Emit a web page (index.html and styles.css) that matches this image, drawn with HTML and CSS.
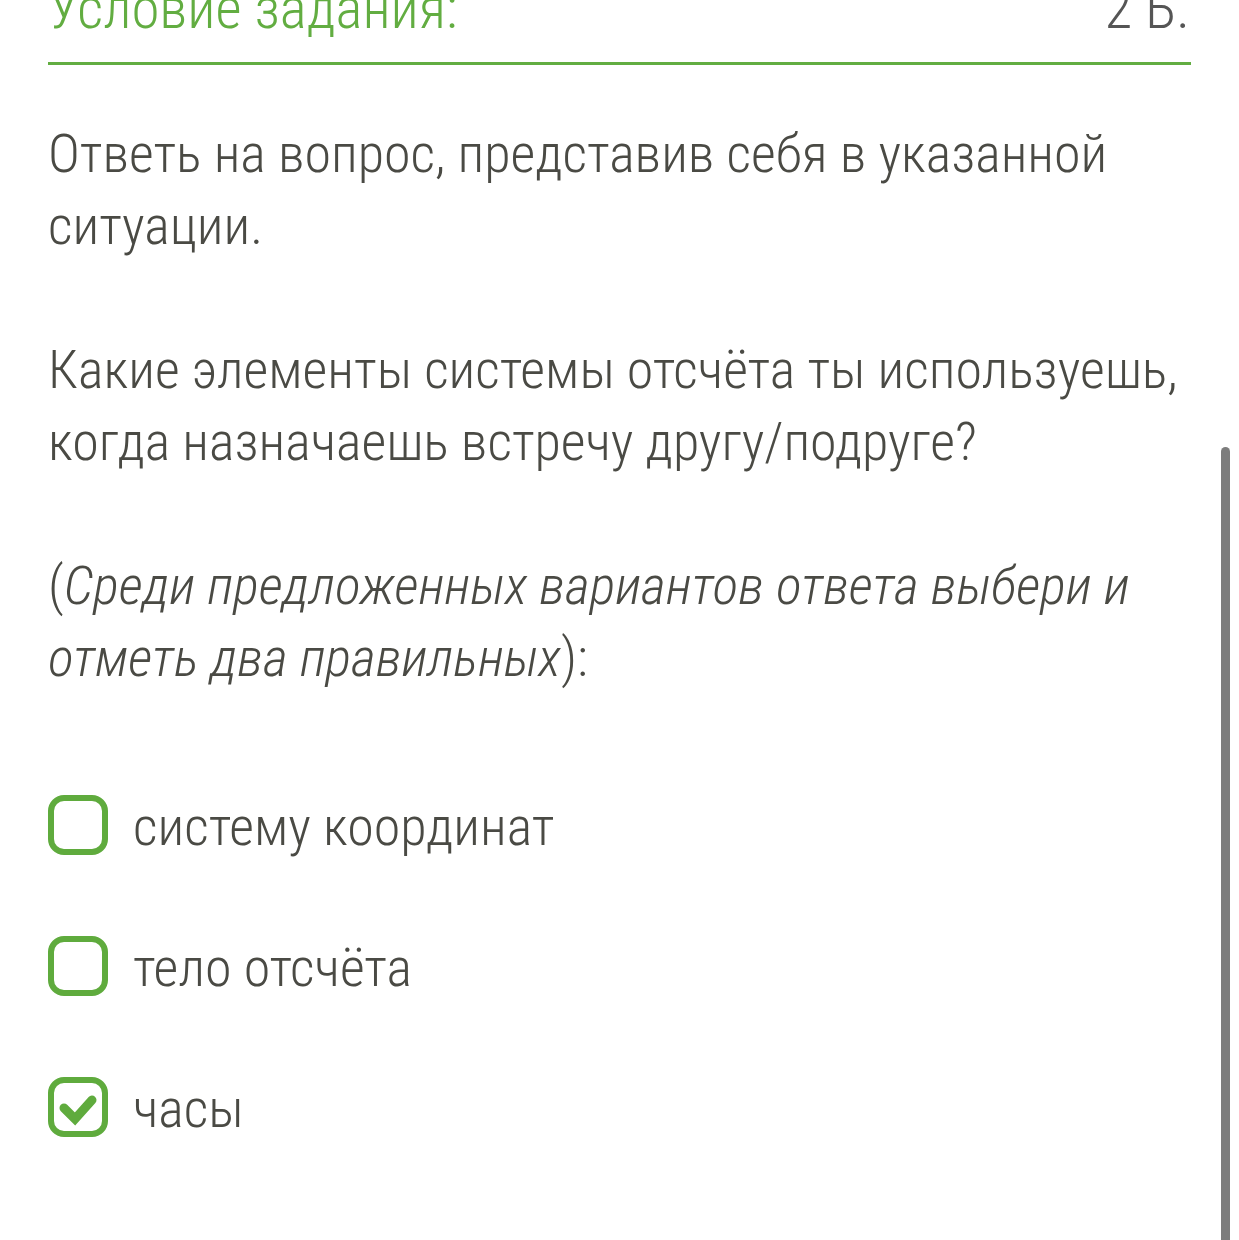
FILE: index.html
```html
<!DOCTYPE html>
<html lang="ru">
<head>
    <meta charset="UTF-8">
    <meta name="viewport" content="width=device-width, initial-scale=1.0">
    <title>Условие задания</title>
    <link rel="stylesheet" href="styles.css">
</head>
<body>
<div class="task">

    <div class="task-header">
        <h2 class="task-title">Условие задания:</h2>
        <span class="task-points">2 Б.</span>
    </div>

    <div class="task-text">
        <p>Ответь на вопрос, представив себя в указанной ситуации.</p>
        <p>Какие элементы системы отсчёта ты используешь, когда назначаешь встречу другу/подруге?</p>
        <p>(<em>Среди предложенных вариантов ответа выбери и отметь два правильных</em>):</p>
    </div>

    <div class="answers">
        <label class="answer">
            <input type="checkbox" name="answer" value="1">
            <span class="box"></span>
            <span class="answer-text">систему координат</span>
        </label>
        <label class="answer">
            <input type="checkbox" name="answer" value="2">
            <span class="box"></span>
            <span class="answer-text">тело отсчёта</span>
        </label>
        <label class="answer">
            <input type="checkbox" name="answer" value="3" checked>
            <span class="box">
                <svg viewBox="0 0 48 48" width="48" height="48"><path d="M10 25 L21 36 L38 17" fill="none" stroke="#5fab3d" stroke-width="9" stroke-linecap="round" stroke-linejoin="miter"/></svg>
            </span>
            <span class="answer-text">часы</span>
        </label>
    </div>
</div>
<div class="scrollbar"></div>
</body>
</html>
```

FILE: styles.css
```css
body {
    margin: 0;
    padding: 0;
    background-color: #fff;
    font-family: "Roboto Condensed", Roboto, sans-serif;
    font-stretch: 75%;
    font-weight: 300;
    color: #4a4a44;
    overflow: hidden;
}
.task {
    padding: 0 48px;
}
.task-header {
    display: flex;
    justify-content: space-between;
    align-items: baseline;
    margin-top: -27px;
    padding-bottom: 17px;
    border-bottom: 3px solid #62ad41;
}
.task-title {
    margin: 0;
    font-size: 57px;
    line-height: 72px;
    font-weight: 300;
    color: #62ad41;
}
.task-points {
    font-size: 57px;
    line-height: 72px;
    color: #555;
    padding-right: 1px;
}
.task-text {
    margin-top: 53px;
}
.task-text p {
    margin: 0 0 72px;
    font-size: 54px;
    line-height: 72px;
}
.task-text p:last-child {
    margin-bottom: 0;
}
.task-text em {
    font-style: italic;
}
.answers {
    margin-top: 97px;
    display: flex;
    flex-direction: column;
    gap: 69px;
}
.answer {
    display: flex;
    align-items: flex-start;
    cursor: pointer;
}
.answer input {
    display: none;
}
.box {
    box-sizing: border-box;
    width: 60px;
    height: 60px;
    margin-top: 4px;
    border: 6px solid #5fab3d;
    border-radius: 16px;
    display: flex;
    align-items: center;
    justify-content: center;
    flex-shrink: 0;
}
.answer-text {
    margin-left: 25px;
    font-size: 54px;
    line-height: 72px;
}
.scrollbar {
    position: fixed;
    right: 9px;
    top: 447px;
    bottom: 0;
    width: 9px;
    border-radius: 5px 5px 0 0;
    background-color: #7d7d7d;
}
```
